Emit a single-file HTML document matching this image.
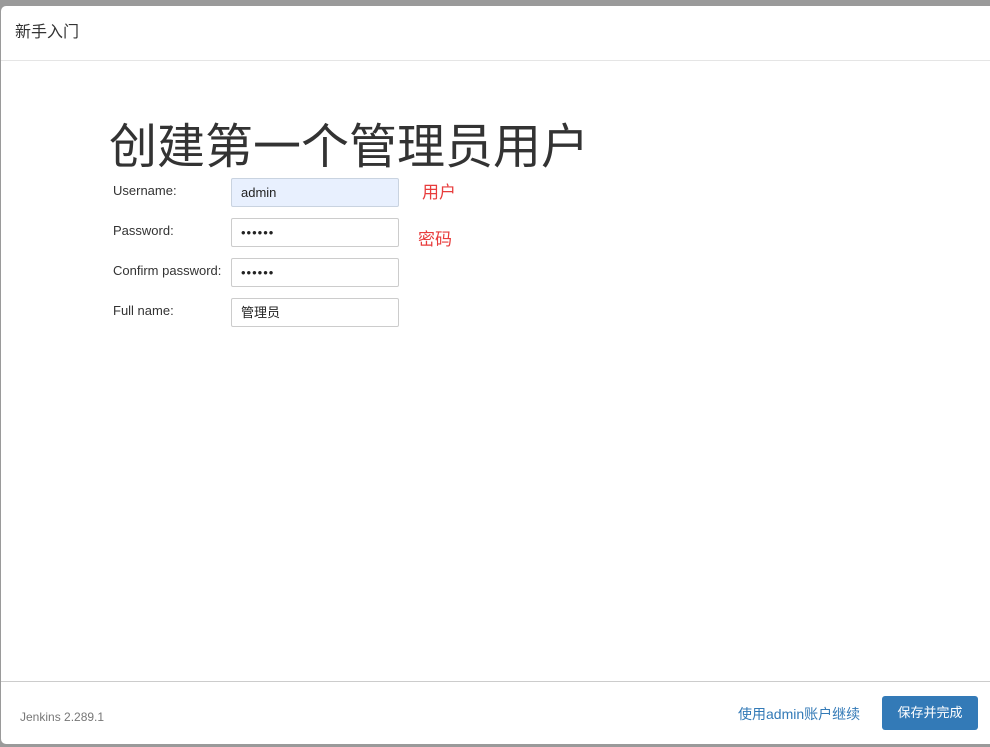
<!DOCTYPE html>
<html><head><meta charset="utf-8"><style>
html,body{margin:0;padding:0;width:990px;height:747px;overflow:hidden;background:#9a9a9a;font-family:"Liberation Sans","Noto Sans CJK SC",sans-serif;}
.modal{position:absolute;left:1px;top:6px;width:995px;height:738px;background:#fff;border-radius:5px 0 0 5px;}
.hd{height:54px;border-bottom:1px solid #e5e5e5;font-size:16px;color:#333;line-height:54px;padding-left:14px;}
h1{position:absolute;left:108px;top:112px;margin:0;font-size:48px;font-weight:normal;color:#333;line-height:60px;letter-spacing:0;}
.lbl{position:absolute;left:112px;font-size:13px;color:#333;}
.in{position:absolute;left:230px;width:168px;height:29px;border:1px solid #ccc;border-radius:2px;box-sizing:border-box;font-size:13px;padding-left:9px;line-height:28px;color:#222;}
.red{position:absolute;color:#e83c3c;font-size:17px;}
.ft{position:absolute;left:0;top:675px;width:990px;height:63px;border-top:1px solid #ccc;}
.ver{position:absolute;left:19px;top:28px;font-size:12px;color:#777;}
.lnk{position:absolute;left:737px;top:22px;font-size:14px;color:#337ab7;}
.btn{position:absolute;left:881px;top:14px;width:96px;height:34px;background:#337ab7;border-radius:3px;color:#fff;font-size:13px;text-align:center;line-height:34px;}
</style></head><body>
<div class="modal">
<div class="hd">新手入门</div>
<h1>创建第一个管理员用户</h1>
<div class="lbl" style="top:177px">Username:</div>
<div class="in" style="top:172px;background:#e8f0fe;border-color:#c9d3e0">admin</div>
<div class="red" style="left:421px;top:172px">用户</div>
<div class="lbl" style="top:217px">Password:</div>
<div class="in" style="top:212px;letter-spacing:1px">••••••</div>
<div class="red" style="left:417px;top:219px">密码</div>
<div class="lbl" style="top:257px">Confirm password:</div>
<div class="in" style="top:252px;letter-spacing:1px">••••••</div>
<div class="lbl" style="top:297px">Full name:</div>
<div class="in" style="top:292px">管理员</div>
<div class="ft"><div class="ver">Jenkins 2.289.1</div><div class="lnk">使用admin账户继续</div><div class="btn">保存并完成</div></div>
</div>
</body></html>
